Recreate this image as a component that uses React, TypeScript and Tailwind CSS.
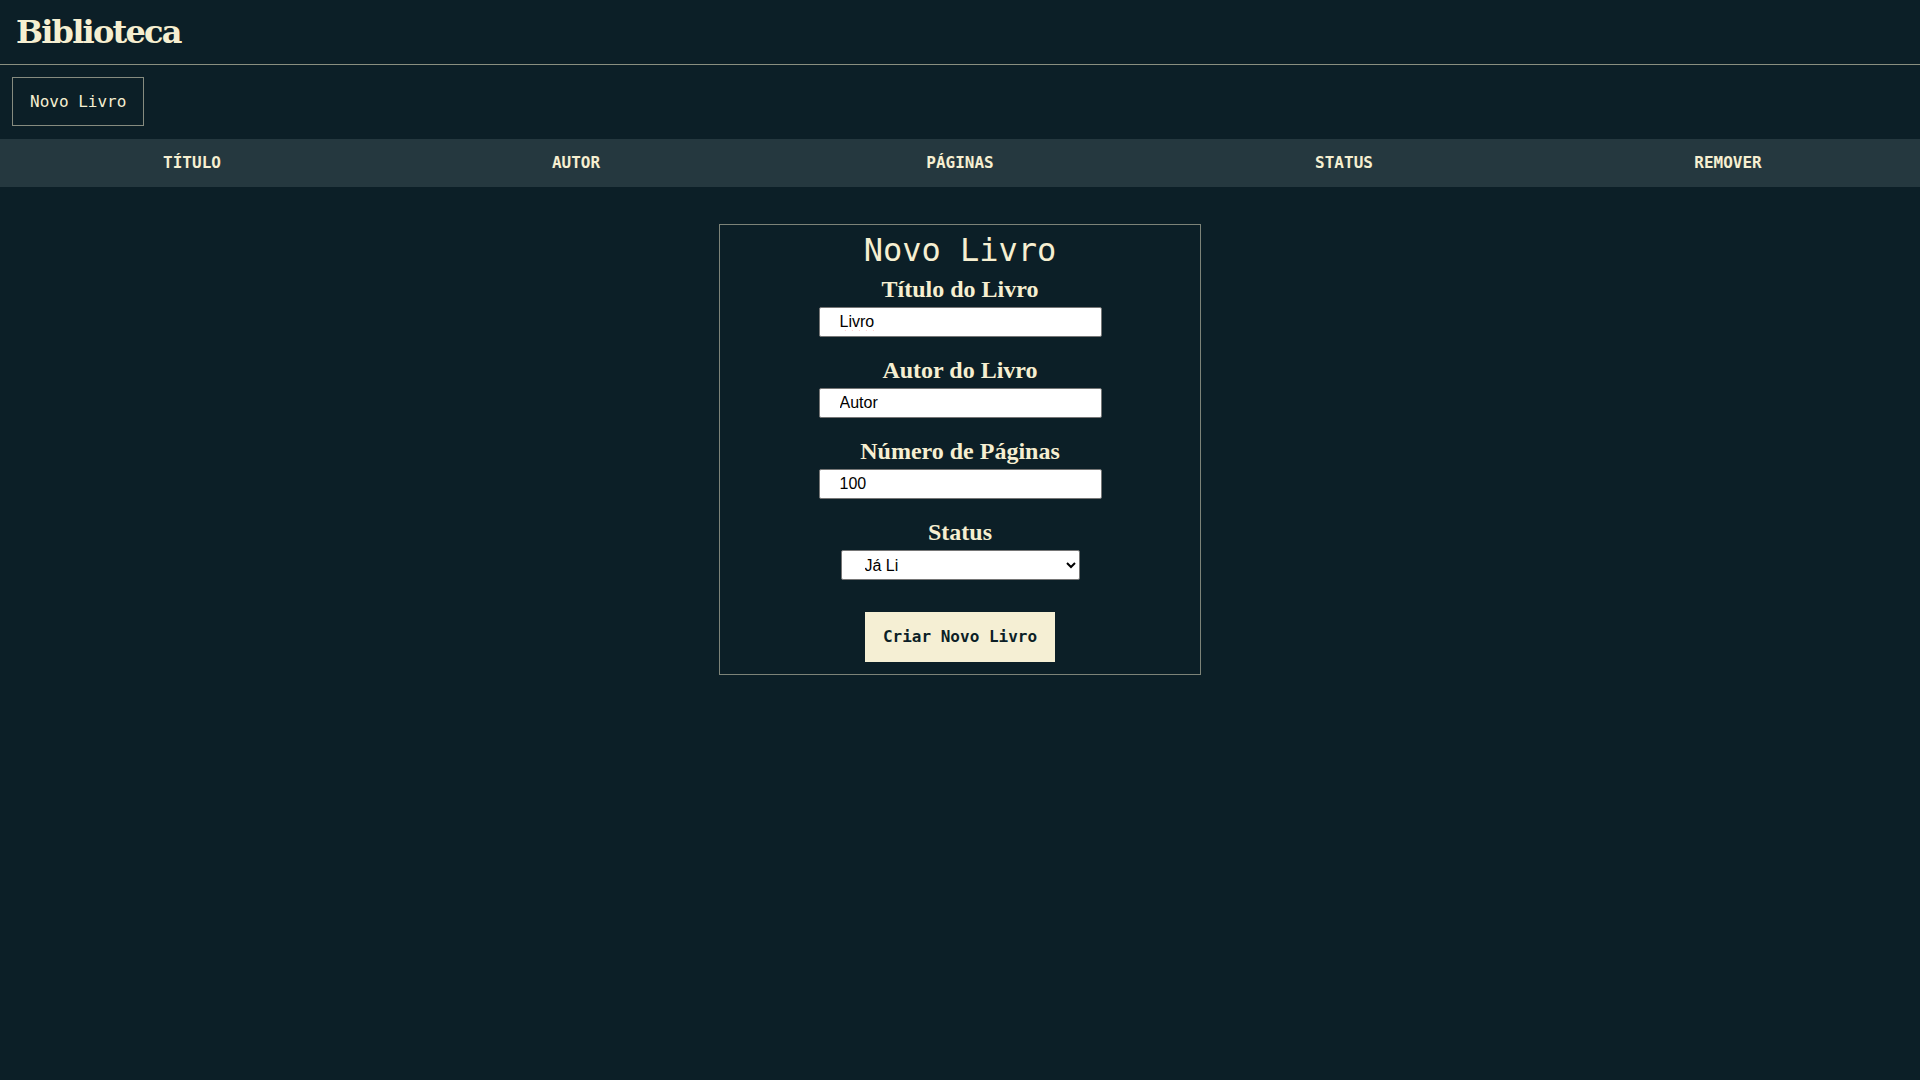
import React from 'react';

const mono = "font-['DejaVu_Sans_Mono','Liberation_Mono',monospace]";
const serif = "font-['Liberation_Serif','Times_New_Roman',serif]";

const columns = ['Título', 'Autor', 'Páginas', 'Status', 'Remover'];

const Field: React.FC<{ label: string; children: React.ReactNode; last?: boolean }> = ({ label, children, last }) => (
  <div className={`flex flex-col items-center ${last ? '' : 'mb-[19px]'}`}>
    <h2 className={`${serif} text-[24px] leading-[28px] font-bold text-[#f6efd1] mb-1`}>{label}</h2>
    {children}
  </div>
);

const inputClass =
  "w-[283px] h-[30px] bg-white text-black border border-[#767676] rounded-[2px] pl-5 text-[16px] font-['Liberation_Sans',Arial,sans-serif] outline-none";

const App: React.FC = () => {
  return (
    <div className="min-h-screen bg-[#0c1f27]">
      {/* Header */}
      <header className="h-[65px] border-b border-[#8a8f80] px-4 pt-3">
        <h1 className="font-['DejaVu_Serif',serif] text-[32px] leading-10 font-bold text-[#f6efd1] tracking-[-1.8px]">
          Biblioteca
        </h1>
      </header>

      {/* Actions */}
      <div className="px-3 pt-3 pb-[13px]">
        <button
          className={`${mono} h-[49px] px-[17px] border border-[#868b7f] text-[16px] text-[#f6efd1] flex items-center`}
        >
          Novo Livro
        </button>
      </div>

      {/* Table header */}
      <div className="grid grid-cols-5 h-12 bg-[#25383f]">
        {columns.map((c) => (
          <div
            key={c}
            className={`${mono} flex items-center justify-center text-[16px] font-bold uppercase text-[#f6efd1]`}
          >
            {c}
          </div>
        ))}
      </div>

      {/* Form */}
      <div className="mt-[37px] mx-auto w-[482px] border border-[#7d8378] pt-[7px] pb-3 flex flex-col items-center">
        <h1 className={`${mono} text-[32px] leading-9 text-[#f6efd1] mb-[7px]`}>Novo Livro</h1>

        <Field label="Título do Livro">
          <input
            className={`${inputClass} underline decoration-wavy decoration-[#e0201b] decoration-1 underline-offset-[3px]`}
            defaultValue="Livro"
          />
        </Field>

        <Field label="Autor do Livro">
          <input className={inputClass} defaultValue="Autor" />
        </Field>

        <Field label="Número de Páginas">
          <input className={inputClass} defaultValue="100" />
        </Field>

        <Field label="Status" last>
          <select
            className="w-[239px] h-[30px] bg-white text-black border border-[#767676] rounded-[2px] pl-[19px] pr-1 text-[16px] font-['Liberation_Sans',Arial,sans-serif]"
            defaultValue="lido"
          >
            <option value="lido">Já Li</option>
            <option value="nao">Não Li</option>
          </select>
        </Field>

        <button
          className={`${mono} mt-8 w-[190px] h-[50px] bg-[#f5efd4] text-[#0c1f27] text-[16px] font-bold`}
        >
          Criar Novo Livro
        </button>
      </div>
    </div>
  );
};

export default App;
